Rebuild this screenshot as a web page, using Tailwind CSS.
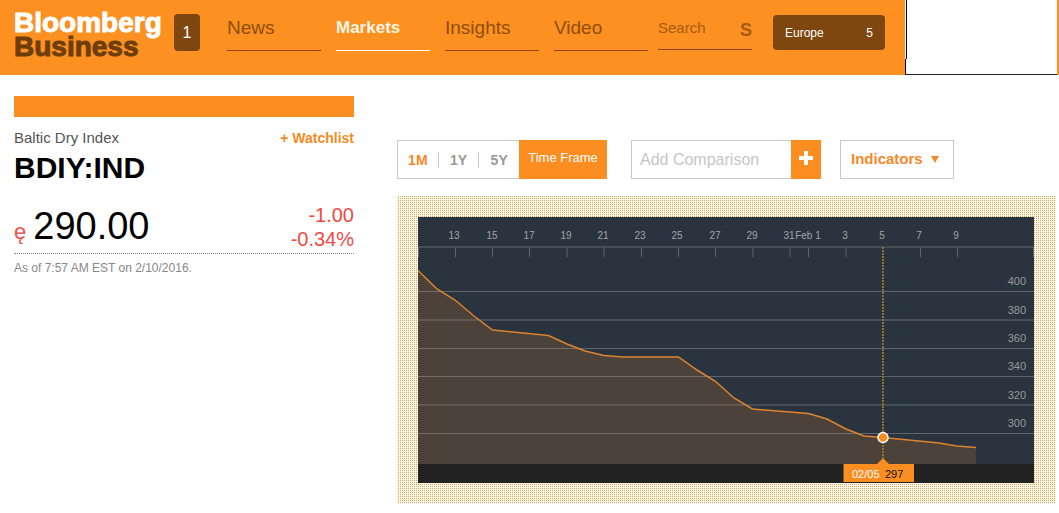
<!DOCTYPE html>
<html lang="en">
<head>
<meta charset="utf-8">
<meta name="viewport" content="width=device-width, initial-scale=1">
<title>BDIY:IND - Baltic Dry Index - Bloomberg Business</title>
<script src="https://cdn.jsdelivr.net/npm/@tailwindcss/browser@4"></script>
</head>
<body class="bg-white font-['Liberation_Sans',Arial,sans-serif]">
<header class="flex h-[75px] items-start bg-[#fc9020] pl-3.5 pr-0.5">
  <a href="#" class="mt-[11px] w-[150px] shrink-0 text-[28px] font-bold leading-6 text-white [-webkit-text-stroke:1px_currentColor]">
    <span class="block">Bloomberg</span>
    <span class="block text-[#6f3d0a]">Business</span>
  </a>
  <button type="button" class="ml-2.5 mt-3.5 h-[37px] w-[26px] shrink-0 rounded bg-[#7d470f] text-base text-white">1</button>
  <nav class="ml-[27px] mt-[15px] flex shrink-0 gap-[15px] text-[19px] leading-[26px] text-[#8f4e0c]">
    <a href="#" class="h-9 w-[94px] border-b border-[#8f4410]">News</a>
    <a href="#" class="h-9 w-[94px] border-b border-white text-[17px] font-bold text-[#fff6e6]" aria-current="page">Markets</a>
    <a href="#" class="h-9 w-[94px] border-b border-[#8f4410]">Insights</a>
    <a href="#" class="h-9 w-[94px] border-b border-[#8f4410]">Video</a>
  </nav>
  <form class="ml-2.5 mt-3.5 flex h-9 w-[94px] shrink-0 border-b border-[#8f4410] text-[#8f4e0c]">
    <input type="search" aria-label="Search" placeholder="Search" class="h-[26px] w-[78px] text-[15px] outline-none placeholder:text-[#a85c10]">
    <button type="button" aria-label="Submit search" class="mt-0.5 h-7 flex-1 text-right text-lg font-bold text-[#a25c12]">S</button>
  </form>
  <label class="relative ml-[21px] mt-[15px] h-[35px] w-28 shrink-0 rounded bg-[#7d470f] text-xs text-white">
    <select aria-label="Region" class="h-full w-full appearance-none rounded bg-transparent px-3 outline-none"><option>Europe</option></select>
    <span class="pointer-events-none absolute right-3 top-2.5 leading-4">5</span>
  </label>
  <div class="ml-5 flex h-[75px] flex-1 flex-col border-b border-[#222] bg-white">
    <div class="ml-px h-[59px] border-l border-black"></div>
    <div class="flex-1 border-l border-black"></div>
  </div>
</header>
<main class="flex items-start gap-[43px] pl-3.5 pr-[3px]">
  <section class="mt-[21px] w-[340px] shrink-0">
    <div class="h-[21px] bg-[#fc8d20]"></div>
    <div class="mt-[11px] flex items-center justify-between leading-[18px]">
      <h2 class="text-[15px] text-[#555]">Baltic Dry Index</h2>
      <a href="#" class="text-sm font-bold text-[#f58a22]">+ Watchlist</a>
    </div>
    <h1 class="mt-0.5 text-[30px] font-bold leading-9 text-black">BDIY:IND</h1>
    <div class="mt-[17px] flex items-start justify-between border-b border-dotted border-[#888]">
      <p class="flex h-[50px] items-baseline gap-[7px] text-[38px] leading-[46px] text-black"><span class="text-[22px] text-[#f0544c]">ę</span>290.00</p>
      <p class="text-right text-xl leading-6 text-[#ee4b44]">-1.00<br>-0.34%</p>
    </div>
    <p class="mt-1.5 text-xs leading-4 text-[#888]">As of 7:57 AM EST on 2/10/2016.</p>
  </section>
  <section class="mt-[65px] min-w-0 flex-1">
    <div class="flex h-[39px]">
      <div class="flex w-[210px] border border-[#c8c8c8] border-r-0 text-sm font-bold text-[#999]">
        <div class="flex flex-1 items-center">
          <button type="button" class="flex-1 text-[#f5892a]">1M</button>
          <span class="h-4 w-px bg-[#ccc]"></span>
          <button type="button" class="flex-1">1Y</button>
          <span class="h-4 w-px bg-[#ccc]"></span>
          <button type="button" class="flex-1">5Y</button>
        </div>
        <button type="button" class="-my-px w-[88px] bg-[#fc8d20] pb-0.5 text-[13px] font-normal text-white">Time Frame</button>
      </div>
      <form class="ml-6 flex w-[190px]">
        <input type="text" aria-label="Add Comparison" placeholder="Add Comparison" class="min-w-0 flex-1 border border-r-0 border-[#c8c8c8] px-2 text-base outline-none placeholder:text-[#c6c6c6]">
        <button type="button" aria-label="Add" class="flex w-[30px] justify-center bg-[#fc8d20] pt-[11px]">
          <svg width="14" height="14" viewBox="0 0 14 14" fill="#fff"><path d="M5 0h4v5h5v4H9v5H5V9H0V5h5z"/></svg>
        </button>
      </form>
      <button type="button" class="ml-[19px] flex w-[114px] items-center gap-2 border border-[#c8c8c8] pl-2.5 text-[15px] font-bold text-[#f5892a]">Indicators
        <svg width="8" height="7" viewBox="0 0 8 7" fill="currentColor"><path d="M0 0h8L4 7z"/></svg>
      </button>
    </div>
    <div class="mt-[17px] bg-[#fff8e2] bg-[conic-gradient(from_90deg_at_1px_1px,transparent_75%,#d2a36c_0)] bg-[length:2px_2px] pb-5 pl-[21px] pr-[22px] pt-[21px]">
      <svg viewBox="418 217 616 266" class="block h-auto w-full" role="img" aria-label="Baltic Dry Index, one month" font-family="Liberation Sans, Arial, sans-serif">
        <path fill="#2a343e" d="M418 217h616v247H418z"/>
        <path fill="#222" d="M418 464h616v19H418z"/>
        <g fill="none" stroke="#5d666d">
          <path d="M418 291.5h616M418 348.5h616M418 376.5h616M418 433.5h616"/>
          <path stroke="#444e57" stroke-width="2" d="M418 320h616M418 405h616"/>
          <path stroke="#444e57" stroke-width="2" d="M418 247h616"/>
          <path d="M418.5 247v10M455.5 247v10M492.5 247v10M529.5 247v10M567 247v10M604 247v10M641.5 247v10M678.5 247v10M715.5 247v10M753 247v10M790 247v10M808.5 247v10M846 247v10M920.5 247v10M957.5 247v10M1033.5 247v10"/>
        </g>
        <path fill="#fc8d20" fill-opacity=".16" d="M418 270.5 437 289l18 11 19 16 18.5 14 56 5.5L567 344l18 7 19 4.5 19 1.5h55.5L697 370l18 11 19 17 18.5 11 56 4.5L827 419l19 10 18 7 19 1.5 56 5.5 18 3 19 1.5V464H418z"/>
        <path fill="none" stroke="#dc8430" stroke-width="1.5" d="M418 270.5 437 289l18 11 19 16 18.5 14 56 5.5L567 344l18 7 19 4.5 19 1.5h55.5L697 370l18 11 19 17 18.5 11 56 4.5L827 419l19 10 18 7 19 1.5 56 5.5 18 3 19 1.5"/>
        <path stroke="#8f732d" stroke-width="2" stroke-dasharray="2 1" d="M883 247v211"/>
        <circle cx="883" cy="437.5" r="5" fill="#fc8d20" stroke="#fff" stroke-width="1.5"/>
        <path fill="#fc8d20" d="M843.5 464H877l6-6 6 6h25v18h-70.5z"/>
        <g font-size="11"><text x="852" y="478" fill="#fff">02/05</text><text x="885" y="478" fill="#111">297</text></g>
        <g fill="#a0a5a9" font-size="10" text-anchor="middle">
          <text x="454" y="239">13</text><text x="492" y="239">15</text><text x="529" y="239">17</text><text x="566" y="239">19</text><text x="603" y="239">21</text><text x="640" y="239">23</text><text x="677" y="239">25</text><text x="715" y="239">27</text><text x="752" y="239">29</text><text x="789" y="239">31</text><text x="808" y="239">Feb 1</text><text x="845" y="239">3</text><text x="882" y="239">5</text><text x="919" y="239">7</text><text x="956" y="239">9</text>
        </g>
        <g fill="#959a9e" font-size="11" text-anchor="end">
          <text x="1026" y="285">400</text><text x="1026" y="314">380</text><text x="1026" y="342">360</text><text x="1026" y="370">340</text><text x="1026" y="399">320</text><text x="1026" y="427">300</text>
        </g>
      </svg>
    </div>
  </section>
</main>
</body>
</html>
